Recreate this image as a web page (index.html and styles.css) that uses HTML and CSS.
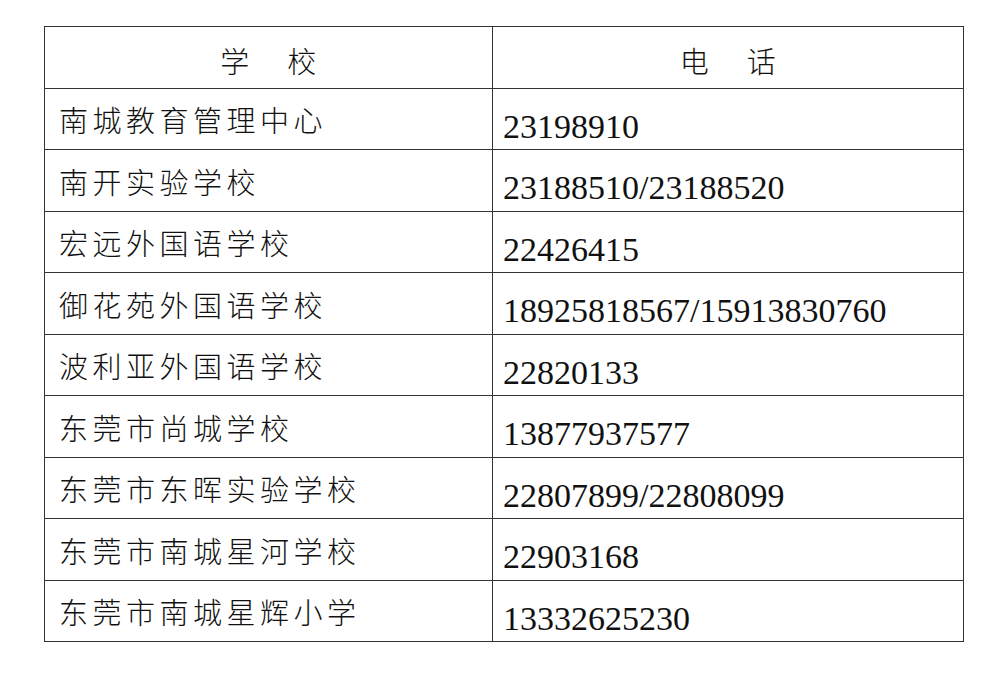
FILE: index.html
```html
<!DOCTYPE html>
<html lang="zh-CN">
<head>
<meta charset="utf-8">
<title>学校电话</title>
<link rel="stylesheet" href="styles.css">
</head>
<body>
<table class="list">
  <colgroup><col class="c-school"><col class="c-phone"></colgroup>
  <thead>
    <tr><th class="hd">学　校</th><th class="hd">电　话</th></tr>
  </thead>
  <tbody>
    <tr><td class="name">南城教育管理中心</td><td class="tel">23198910</td></tr>
    <tr><td class="name">南开实验学校</td><td class="tel">23188510/23188520</td></tr>
    <tr><td class="name">宏远外国语学校</td><td class="tel">22426415</td></tr>
    <tr><td class="name">御花苑外国语学校</td><td class="tel">18925818567/15913830760</td></tr>
    <tr><td class="name">波利亚外国语学校</td><td class="tel">22820133</td></tr>
    <tr><td class="name">东莞市尚城学校</td><td class="tel">13877937577</td></tr>
    <tr><td class="name">东莞市东晖实验学校</td><td class="tel">22807899/22808099</td></tr>
    <tr><td class="name">东莞市南城星河学校</td><td class="tel">22903168</td></tr>
    <tr><td class="name">东莞市南城星辉小学</td><td class="tel">13332625230</td></tr>
  </tbody>
</table>
</body>
</html>
```
FILE: styles.css
```css
html, body {
  margin: 0;
  padding: 0;
  background: #ffffff;
}
body {
  padding: 26px 0 0 44px;
}
.list {
  border-collapse: collapse;
  table-layout: fixed;
  width: 920px;
}
.c-school { width: 448px; }
.list tr { height: 61.5px; }
.list th, .list td {
  border: 1px solid #333333;
  vertical-align: middle;
  color: #111111;
}
.hd, .name {
  font-family: "Noto Sans CJK SC", sans-serif;
  font-weight: 300;
  font-size: 29px;
  line-height: 1;
  letter-spacing: 4.5px;
}
.hd {
  text-align: center;
  padding: 6px 0 0 4px;
}
.name {
  text-align: left;
  padding: 2px 0 0 14px;
}
.tel {
  font-family: "Liberation Serif", "Times New Roman", serif;
  font-size: 34px;
  line-height: 39px;
  padding: 15px 0 0 10px;
  white-space: nowrap;
}
```
